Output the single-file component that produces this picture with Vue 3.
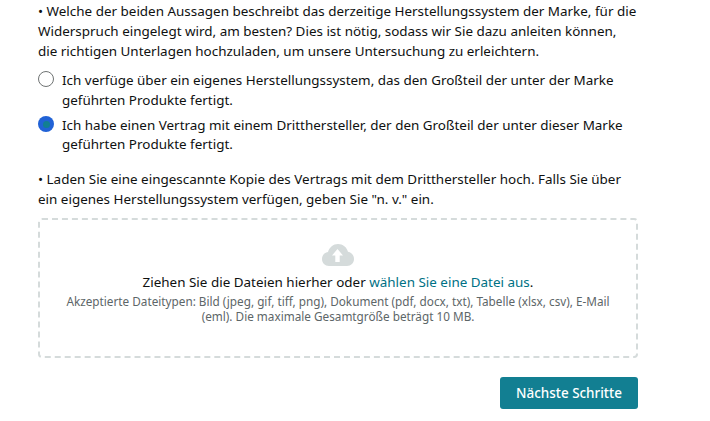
<script setup>
const options = [
  { text: 'Ich verfüge über ein eigenes Herstellungssystem, das den Großteil der unter der Marke geführten Produkte fertigt.', checked: false },
  { text: 'Ich habe einen Vertrag mit einem Dritthersteller, der den Großteil der unter dieser Marke geführten Produkte fertigt.', checked: true }
]
</script>

<template>
  <main class="page">
    <p class="para first">• Welche der beiden Aussagen beschreibt das derzeitige Herstellungssystem der Marke, für die<br>Widerspruch eingelegt wird, am besten? Dies ist nötig, sodass wir Sie dazu anleiten können,<br>die richtigen Unterlagen hochzuladen, um unsere Untersuchung zu erleichtern.</p>
    <div class="options">
      <label v-for="o in options" :key="o.text" class="option">
        <span class="radio" :class="{ checked: o.checked }"><span v-if="o.checked" class="dot"></span></span>
        <span class="option-text">{{ o.text }}</span>
      </label>
    </div>
    <p class="para second">• Laden Sie eine eingescannte Kopie des Vertrags mit dem Dritthersteller hoch. Falls Sie über ein eigenes Herstellungssystem verfügen, geben Sie "n. v." ein.</p>
    <section class="drop">
      <svg class="cloud" width="32" height="22" viewBox="0 0 32 22">
        <path fill="#d5dbdb" d="M7 22C3 22 0 19 0 15 0 11.300 2.500 8.500 6 8 7.300 3.300 11.300 0 16 0c4.800 0 8.800 3.200 10 7.800C29.500 8.400 32 11.300 32 15 32 19 29 22 25 22Z"/>
        <path fill="#fff" d="M15.500 5 21 11.500H17.700V18H13.300V11.500H10Z"/>
      </svg>
      <p class="drop-title">Ziehen Sie die Dateien hierher oder <a class="link">wählen Sie eine Datei aus</a>.</p>
      <p class="drop-note">Akzeptierte Dateitypen: Bild (jpeg, gif, tiff, png), Dokument (pdf, docx, txt), Tabelle (xlsx, csv), E-Mail (eml). Die maximale Gesamtgröße beträgt 10 MB.</p>
    </section>
    <div class="actions">
      <button class="next" type="button">Nächste Schritte</button>
    </div>
  </main>
</template>

<style scoped>
.page {
  width: 600px;
  margin-left: 38px;
  padding-top: 1px;
  font-family: "Noto Sans", sans-serif;
  font-size: 13.45px;
  line-height: 20px;
  color: #0f1111;
}
p { margin: 0; }
.first { white-space: nowrap; }
.options {
  margin-top: 9px;
  display: flex;
  flex-direction: column;
  gap: 6px;
}
.option {
  display: flex;
  gap: 8px;
}
.option + .option { line-height: 19px; }
.radio {
  flex: none;
  width: 16px;
  height: 16px;
  margin-top: 1px;
  border: 1px solid #6f7373;
  border-radius: 50%;
  background: #fff;
  display: flex;
  align-items: center;
  justify-content: center;
  box-sizing: border-box;
}
.radio.checked {
  margin-top: 0;
  border: 0;
  background: #2162d6;
}
.dot {
  width: 7px;
  height: 7px;
  border-radius: 50%;
  background: #127f92;
}
.second { margin-top: 15px; }
.drop {
  margin-top: 9px;
  height: 140px;
  box-sizing: border-box;
  border: 2px dashed #d5dbdb;
  border-radius: 4px;
  display: flex;
  flex-direction: column;
  align-items: center;
  text-align: center;
  padding: 24px 20px 0;
}
.cloud { display: block; }
.drop-title { margin-top: 6px; }
.link { color: #007185; }
.drop-note {
  margin-top: 2px;
  font-size: 11.75px;
  line-height: 15px;
  color: #5d6668;
  width: 548px;
}
.actions {
  margin-top: 19px;
  display: flex;
  justify-content: flex-end;
}
.next {
  width: 138px;
  height: 32px;
  border: 0;
  border-radius: 3px;
  background: #127f92;
  color: #fff;
  font: 500 13.45px/20px "Noto Sans", sans-serif;
}
</style>
